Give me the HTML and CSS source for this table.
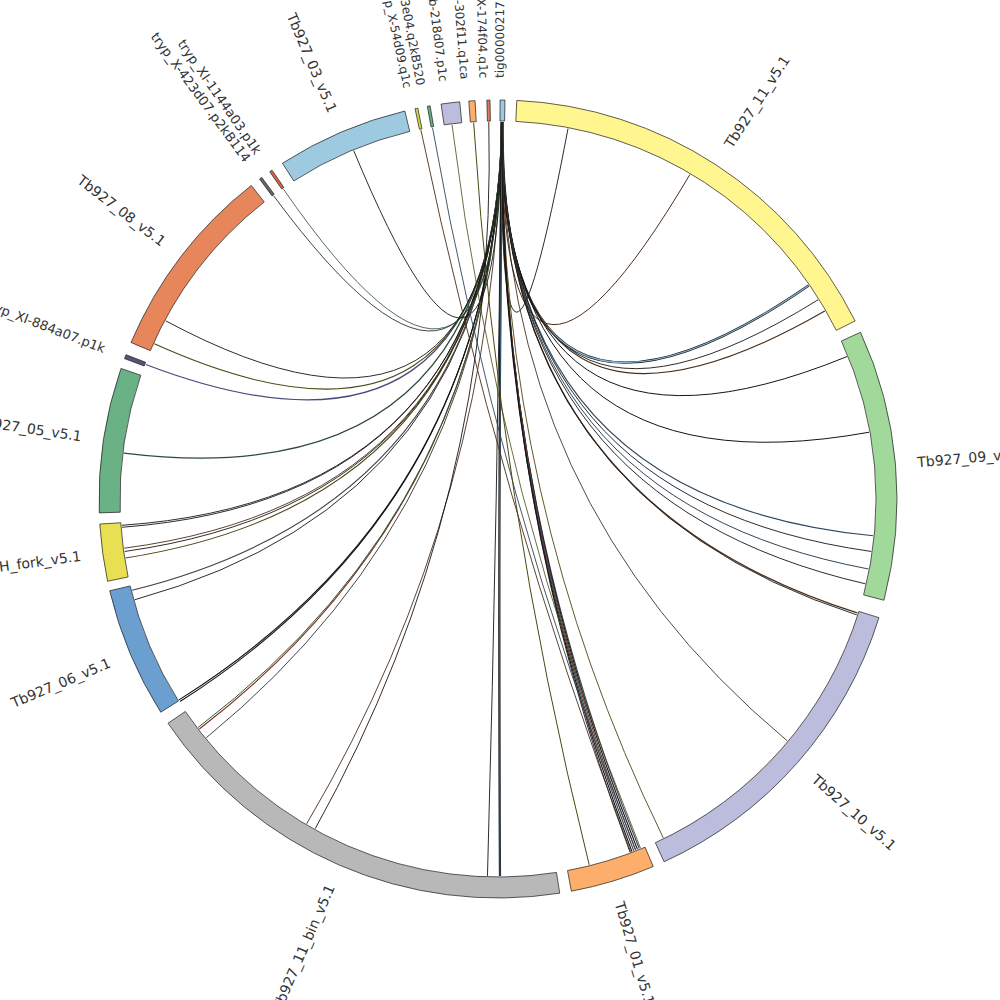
FILE: index.html
```html
<!DOCTYPE html>
<html>
<head>
<meta charset="utf-8">
<title>Circos</title>
<link rel="stylesheet" href="styles.css">
</head>
<body>
<svg id="chart" class="chart" width="1000" height="1000" viewBox="0 0 1000 1000" xmlns="http://www.w3.org/2000/svg">
  <g id="links"></g>
  <g id="ideograms"></g>
  <g id="labels"></g>
</svg>
<script src="script.js"></script>
</body>
</html>
```

FILE: styles.css
```css
html, body {
  margin: 0;
  padding: 0;
  background: #ffffff;
}
.chart {
  display: block;
}
.seg {
  stroke: #1a1a1a;
  stroke-width: 0.7;
  stroke-linejoin: miter;
}
.link {
  fill: none;
  stroke-linecap: butt;
}
.label {
  font-family: "DejaVu Sans", "Liberation Sans", sans-serif;
  font-size: 14px;
  fill: #333333;
}
.label-sm {
  font-size: 13px;
}
.label-xs {
  font-size: 12px;
}
```

FILE: script.js
```js
(function () {
  var NS = 'http://www.w3.org/2000/svg';
  var CX = 498, CY = 499, RO = 399, RI = 378, RC = 377, RL = 421;

  function P(r, a) {
    var t = a * Math.PI / 180;
    return [CX + r * Math.sin(t), CY - r * Math.cos(t)];
  }
  function f(v) { return v.toFixed(2); }
  function el(tag, attrs, parent) {
    var e = document.createElementNS(NS, tag);
    for (var k in attrs) e.setAttribute(k, attrs[k]);
    parent.appendChild(e);
    return e;
  }

  // [start, end, fill, label, labelSizeClass, labelAngleOffset]
  var segments = [
    [0.3, 1.0, '#9ecae1', 'tig00000217', 'label-xs', -0.4],
    [2.7, 63.5, '#fff68f', 'Tb927_11_v5.1', '', 0],
    [65.3, 104.7, '#a1d99b', 'Tb927_09_v5.1', '', 0],
    [107.3, 155.4, '#bcbddc', 'Tb927_10_v5.1', '', 0],
    [157.1, 169.4, '#fdae6b', 'Tb927_01_v5.1', '', 0],
    [171.1, 235.8, '#b8b8b8', 'Tb927_11_bin_v5.1', '', 0],
    [237.7, 256.7, '#6a9fcf', 'Tb927_06_v5.1', '', 0],
    [258.1, 266.4, '#e9df52', 'Tb927_RH_fork_v5.1', '', 0],
    [268.0, 289.1, '#6bb186', 'Tb927_05_v5.1', '', 0],
    [290.6, 291.2, '#55557a', 'tryp_XI-884a07.p1k', 'label-sm', 0],
    [293.1, 321.8, '#e6865a', 'Tb927_08_v5.1', '', 0],
    [323.3, 323.7, '#666666', 'tryp_X-423d07.p2kB114', 'label-sm', 0],
    [325.1, 325.5, '#d9634a', 'tryp_XI-1144a03.p1k', 'label-sm', 0],
    [327.3, 346.5, '#9ecae1', 'Tb927_03_v5.1', '', 0],
    [348.0, 348.4, '#d6d64a', 'tryp_X-54d09.q1c', 'label-xs', -0.6],
    [349.8, 350.2, '#6bb186', 'tryp_XI-1193e04.q2kB520', 'label-xs', -0.6],
    [351.8, 354.5, '#bcbddc', 'tryp_XIb-218d07.p1c', 'label-xs', -0.6],
    [355.8, 356.7, '#fdae6b', 'tryp_X-302f11.q1ca', 'label-xs', -0.8],
    [358.4, 358.85, '#e07a5f', 'tryp_X-174f04.q1c', 'label-xs', -0.6]
  ];

  var k = '#151515', br = '#4a2e1a', ol = '#4a4812', sl = '#2f4658', rd = '#7a3022';

  // [angleA, angleB, colour, width, ribbonFill]
  var links = [
    [10.7, 0.55, k, 0.9],
    [30.6, 0.6, br, 1.0],
    [55.5, 0.7, k, 2.4, '#8ab8d4'],
    [58.1, 0.65, k, 0.9],
    [60.1, 0.7, br, 1.1],
    [67.8, 0.6, k, 1.0],
    [79.8, 0.6, k, 1.0],
    [95.6, 0.65, sl, 1.1],
    [98.0, 0.7, k, 0.9],
    [100.7, 0.6, sl, 1.0],
    [103.0, 0.55, k, 0.9],
    [107.6, 0.6, br, 1.3],
    [107.9, 0.5, k, 0.9],
    [129.9, 0.6, '#2a1a10', 0.8],
    [154.0, 0.6, ol, 0.9],
    [158.0, 0.5, sl, 1.1],
    [158.3, 0.6, k, 1.1],
    [158.6, 0.7, rd, 1.1],
    [158.9, 0.6, sl, 1.1],
    [159.2, 0.5, k, 1.1],
    [159.5, 0.7, k, 0.9],
    [179.7, 0.6, k, 2.2, '#3d5f7a'],
    [181.6, 0.5, k, 0.9],
    [210.5, 0.5, br, 0.9],
    [230.7, 0.6, k, 0.8],
    [232.4, 0.55, rd, 1.1],
    [232.7, 0.65, '#2f5a36', 1.0],
    [237.5, 0.6, k, 1.1],
    [237.8, 0.65, k, 1.1],
    [254.5, 0.6, k, 0.9],
    [256.0, 0.55, '#444444', 1.1],
    [261.0, 0.6, ol, 1.1],
    [262.0, 0.65, k, 0.9],
    [262.5, 0.55, br, 0.9],
    [265.7, 0.6, k, 0.9],
    [266.0, 0.65, k, 0.9],
    [277.0, 0.6, '#2e4a3a', 1.3],
    [290.9, 0.6, '#4a4a7a', 1.3],
    [294.3, 0.6, ol, 1.1],
    [298.2, 0.6, k, 0.9],
    [323.5, 0.6, k, 0.8],
    [325.3, 0.6, '#2a4a30', 0.8],
    [337.5, 0.6, k, 0.9],
    [348.2, 159.4, br, 0.9],
    [350.0, 158.6, sl, 0.9],
    [353.0, 157.8, ol, 0.8],
    [356.3, 166.0, ol, 1.0],
    [358.6, 209.0, k, 0.9]
  ];

  var gLinks = document.getElementById('links');
  var gSeg = document.getElementById('ideograms');
  var gLab = document.getElementById('labels');

  links.forEach(function (l) {
    var a = P(RC, l[0]), b = P(RC, l[1]);
    var d = 'M' + f(a[0]) + ' ' + f(a[1]) + ' Q' + CX + ' ' + CY + ' ' + f(b[0]) + ' ' + f(b[1]);
    el('path', { 'class': 'link', d: d, stroke: l[2], 'stroke-width': l[3] }, gLinks);
    if (l[4]) {
      el('path', { 'class': 'link', d: d, stroke: l[4], 'stroke-width': Math.max(0.6, l[3] - 1.2) }, gLinks);
    }
  });

  segments.forEach(function (s) {
    var a0 = s[0], a1 = s[1];
    var large = (a1 - a0) > 180 ? 1 : 0;
    var o0 = P(RO, a0), o1 = P(RO, a1), i1 = P(RI, a1), i0 = P(RI, a0);
    var d = 'M' + f(o0[0]) + ' ' + f(o0[1]) +
      ' A' + RO + ' ' + RO + ' 0 ' + large + ' 1 ' + f(o1[0]) + ' ' + f(o1[1]) +
      ' L' + f(i1[0]) + ' ' + f(i1[1]) +
      ' A' + RI + ' ' + RI + ' 0 ' + large + ' 0 ' + f(i0[0]) + ' ' + f(i0[1]) + ' Z';
    el('path', { 'class': 'seg', d: d, fill: s[2] }, gSeg);

    var mid = (a0 + a1) / 2;
    var la = mid + s[5];
    var p = P(RL, la);
    var rot, anchor;
    if (mid < 180) { rot = la - 90; anchor = 'start'; }
    else { rot = la + 90; anchor = 'end'; }
    var t = el('text', {
      'class': 'label' + (s[4] ? ' ' + s[4] : ''),
      'text-anchor': anchor,
      'dominant-baseline': 'central',
      transform: 'translate(' + f(p[0]) + ' ' + f(p[1]) + ') rotate(' + f(rot) + ')'
    }, gLab);
    t.textContent = s[3];
  });
})();
```
